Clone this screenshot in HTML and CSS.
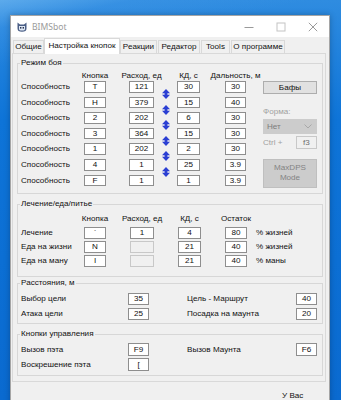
FILE: index.html
```html
<!DOCTYPE html>
<html lang="ru">
<head>
<meta charset="utf-8">
<title>BIMSbot</title>
<link rel="stylesheet" href="styles.css">
</head>
<body>
<div class="desktop">
  <div class="window">
    <div class="titlebar">
      <svg class="app-icon" viewBox="0 0 10 10" width="10" height="10">
        <path d="M0.5 0.5 L3 2.5 L7 2.5 L9.5 0.5 L9.5 6.5 Q9.5 9.7 5 9.7 Q0.5 9.7 0.5 6.5 Z" fill="#4b5f86"/>
        <path d="M2 4 L8 4 L8 7 Q8 8.6 5 8.6 Q2 8.6 2 7 Z" fill="#dfe8f5"/>
        <rect x="3" y="5" width="1.4" height="1.6" fill="#2a3550"/>
        <rect x="5.6" y="5" width="1.4" height="1.6" fill="#2a3550"/>
      </svg>
      <span class="title">BIMSbot</span>
      <div class="controls">
        <div class="ctl"><svg viewBox="0 0 10 10" width="10" height="10"><path d="M0.5 5.5 H9.5" stroke="#9a9a9a" stroke-width="1"/></svg></div>
        <div class="ctl"><svg viewBox="0 0 10 10" width="10" height="10"><rect x="1" y="1" width="8" height="8" fill="none" stroke="#c4c4c4" stroke-width="1"/></svg></div>
        <div class="ctl"><svg viewBox="0 0 10 10" width="10" height="10"><path d="M0.8 0.8 L9.2 9.2 M9.2 0.8 L0.8 9.2" stroke="#9a9a9a" stroke-width="1"/></svg></div>
      </div>
    </div>
    <div class="client">
      <div class="tabs">
        <div class="tab t1">Общие</div>
        <div class="tab active">Настройка кнопок</div>
        <div class="tab t3">Реакции</div>
        <div class="tab t4">Редактор</div>
        <div class="tab t5">Tools</div>
        <div class="tab t6">О программе</div>
      </div>
      <div class="panel">
        <fieldset class="group g-battle">
          <legend>Режим боя</legend>
          <div class="battle">
            <div class="grid battle-grid">
              <div class="hd c-key"><span>Кнопка</span></div>
              <div class="hd c-rs"><span>Расход, ед</span></div>
              <div class="hd c-kd"><span>КД, с</span></div>
              <div class="hd c-ds"><span>Дальность, м</span></div>

              <div class="lbl c-lbl">Способность</div><div class="box c-key">T</div><div class="box c-rs">121</div><div class="box c-kd">30</div><div class="box c-ds">30</div>
              <div class="lbl c-lbl">Способность</div><div class="box c-key">H</div><div class="box c-rs">379</div><div class="box c-kd">15</div><div class="box c-ds">40</div>
              <div class="lbl c-lbl">Способность</div><div class="box c-key">2</div><div class="box c-rs">202</div><div class="box c-kd">6</div><div class="box c-ds">30</div>
              <div class="lbl c-lbl">Способность</div><div class="box c-key">3</div><div class="box c-rs">364</div><div class="box c-kd">15</div><div class="box c-ds">30</div>
              <div class="lbl c-lbl">Способность</div><div class="box c-key">1</div><div class="box c-rs">202</div><div class="box c-kd">2</div><div class="box c-ds">30</div>
              <div class="lbl c-lbl">Способность</div><div class="box c-key">4</div><div class="box c-rs">1</div><div class="box c-kd">25</div><div class="box c-ds">3.9</div>
              <div class="lbl c-lbl">Способность</div><div class="box c-key">F</div><div class="box c-rs">1</div><div class="box c-kd">1</div><div class="box c-ds">3.9</div>

              <div class="arrows">
                <svg class="swap" viewBox="0 0 8 10" width="8" height="10"><path d="M4 0 L8 4.2 L5.4 4.2 L5.4 5.8 L8 5.8 L4 10 L0 5.8 L2.6 5.8 L2.6 4.2 L0 4.2 Z" fill="#2b3fd3"/></svg>
                <svg class="swap" viewBox="0 0 8 10" width="8" height="10"><path d="M4 0 L8 4.2 L5.4 4.2 L5.4 5.8 L8 5.8 L4 10 L0 5.8 L2.6 5.8 L2.6 4.2 L0 4.2 Z" fill="#2b3fd3"/></svg>
                <svg class="swap" viewBox="0 0 8 10" width="8" height="10"><path d="M4 0 L8 4.2 L5.4 4.2 L5.4 5.8 L8 5.8 L4 10 L0 5.8 L2.6 5.8 L2.6 4.2 L0 4.2 Z" fill="#2b3fd3"/></svg>
                <svg class="swap" viewBox="0 0 8 10" width="8" height="10"><path d="M4 0 L8 4.2 L5.4 4.2 L5.4 5.8 L8 5.8 L4 10 L0 5.8 L2.6 5.8 L2.6 4.2 L0 4.2 Z" fill="#2b3fd3"/></svg>
                <svg class="swap" viewBox="0 0 8 10" width="8" height="10"><path d="M4 0 L8 4.2 L5.4 4.2 L5.4 5.8 L8 5.8 L4 10 L0 5.8 L2.6 5.8 L2.6 4.2 L0 4.2 Z" fill="#2b3fd3"/></svg>
                <svg class="swap" viewBox="0 0 8 10" width="8" height="10"><path d="M4 0 L8 4.2 L5.4 4.2 L5.4 5.8 L8 5.8 L4 10 L0 5.8 L2.6 5.8 L2.6 4.2 L0 4.2 Z" fill="#2b3fd3"/></svg>
              </div>
            </div>
            <div class="side">
              <div class="btn">Бафы</div>
              <div class="dis-label form-label">Форма:</div>
              <div class="select"><span>Нет</span><svg viewBox="0 0 8 5" width="8" height="5"><path d="M0.5 0.5 L4 4 L7.5 0.5" fill="none" stroke="#a8a8a8" stroke-width="1"/></svg></div>
              <div class="ctrl-row"><span class="dis-label">Ctrl +</span><div class="box dis-box">f3</div></div>
              <div class="btn btn-dis">MaxDPS<br>Mode</div>
            </div>
          </div>
        </fieldset>

        <fieldset class="group g-heal">
          <legend>Лечение/еда/питье</legend>
          <div class="grid heal-grid">
            <div class="hd c-key"><span>Кнопка</span></div>
            <div class="hd c-rs"><span>Расход, ед</span></div>
            <div class="hd c-kd"><span>КД, с</span></div>
            <div class="hd c-ds"><span>Остаток</span></div>

            <div class="lbl c-lbl">Лечение</div><div class="box c-key">`</div><div class="box c-rs">1</div><div class="box c-kd">4</div><div class="box c-ds">80</div><div class="lbl c-unit">% жизней</div>
            <div class="lbl c-lbl">Еда на жизни</div><div class="box c-key">N</div><div class="box c-rs dis-box"></div><div class="box c-kd">21</div><div class="box c-ds">40</div><div class="lbl c-unit">% жизней</div>
            <div class="lbl c-lbl">Еда на ману</div><div class="box c-key">I</div><div class="box c-rs dis-box"></div><div class="box c-kd">21</div><div class="box c-ds">40</div><div class="lbl c-unit">% маны</div>
          </div>
        </fieldset>

        <fieldset class="group g-dist">
          <legend>Расстояния, м</legend>
          <div class="grid pair-grid dist-grid">
            <div class="lbl">Выбор цели</div><div class="box">35</div><div></div><div class="lbl">Цель - Маршрут</div><div class="box">40</div>
            <div class="lbl">Атака цели</div><div class="box">25</div><div></div><div class="lbl">Посадка на маунта</div><div class="box">20</div>
          </div>
        </fieldset>

        <fieldset class="group g-keys">
          <legend>Кнопки управления</legend>
          <div class="grid pair-grid keys-grid">
            <div class="lbl">Вызов пэта</div><div class="box">F9</div><div></div><div class="lbl">Вызов Маунта</div><div class="box">F6</div>
            <div class="lbl">Воскрешение пэта</div><div class="box">[</div>
          </div>
        </fieldset>
      </div>
      <div class="status">У Вас</div>
    </div>
  </div>
</div>
</body>
</html>
```

FILE: styles.css
```css
html, body {
  margin: 0;
  padding: 0;
}

body {
  width: 341px;
  height: 400px;
  overflow: hidden;
  font-family: "Liberation Sans", Arial, sans-serif;
  font-size: 8.1px;
  color: #111;
}

.desktop {
  box-sizing: border-box;
  width: 341px;
  height: 400px;
  padding: 15px 11px 0 10px;
  background:
    linear-gradient(168deg, rgba(130, 195, 245, 0.55) 0%, rgba(80, 160, 235, 0.25) 6%, rgba(0, 0, 0, 0) 14%),
    linear-gradient(180deg, #2f8ce0 0%, #0e74d8 30%, #0a6ad0 100%);
}

.window {
  box-sizing: border-box;
  width: 320px;
  height: 400px;
  border: 1px solid #a5a5a5;
  border-bottom: 0;
  background: #f0f0f0;
  box-shadow: 0 0 6px rgba(0, 0, 0, 0.25);
}

/* ---------- title bar ---------- */
.titlebar {
  height: 21px;
  background: #fff;
  display: flex;
  align-items: center;
}

.app-icon {
  margin-left: 6px;
}

.title {
  margin-left: 5px;
  font-family: "Noto Sans", "Liberation Sans", sans-serif;
  font-size: 8.6px;
  color: #9b9b9b;
}

.controls {
  margin-left: auto;
  display: flex;
  height: 21px;
}

.ctl {
  width: 32px;
  height: 21px;
  display: flex;
  align-items: center;
  justify-content: center;
}

/* ---------- tabs ---------- */
.client {
  background: #f0f0f0;
}

.tabs {
  display: flex;
  align-items: flex-end;
  height: 16px;
  padding-left: 2px;
}

.tab {
  box-sizing: border-box;
  height: 13px;
  line-height: 12px;
  border: 1px solid #d9d9d9;
  border-bottom: 0;
  background: #f0f0f0;
  text-align: center;
  white-space: nowrap;
  margin-right: 1px;
}

.t1 { width: 31px; margin-right: 0; }
.t3 { width: 37px; }
.t4 { width: 42px; }
.t5 { width: 29px; }
.t6 { width: 54px; }

.tab.active {
  width: 76px;
  height: 16px;
  line-height: 14px;
  background: #fff;
  border-color: #d9d9d9;
  margin-right: 0;
  margin-bottom: -1px;
  position: relative;
  z-index: 1;
}

/* ---------- panel ---------- */
.panel {
  box-sizing: border-box;
  width: 314px;
  margin-left: 1px;
  border: 1px solid #d9d9d9;
  background: #f0f0f0;
  padding: 4px 0 5px 0;
}

.group {
  box-sizing: border-box;
  width: 306px;
  min-inline-size: 0;
  margin: 0 0 0 4px;
  border: 1px solid #d7d7d7;
  padding: 3px 3px 3px 3px;
}

.group legend {
  padding: 0 1px;
  margin-left: -1px;
  height: 10px;
  line-height: 10px;
}

.g-heal { margin-top: 5px; padding-top: 5px; padding-bottom: 7px; }
.g-dist { margin-top: 1px; padding-top: 5px; padding-bottom: 3px; }
.g-keys { margin-top: 5px; padding-top: 4px; padding-bottom: 4px; }

.grid {
  display: grid;
}

.battle {
  display: flex;
}

.battle-grid {
  grid-template-columns: 63px 22px 23px 25px 23px 23px 25px 21px;
  grid-template-rows: 10px repeat(7, 15.6px);
}

.heal-grid {
  grid-template-columns: 63px 22px 24px 24px 24px 23px 24px 22px 9px auto;
  grid-template-rows: 13px repeat(3, 14px);
}

.c-lbl { grid-column: 1; }
.c-key { grid-column: 2; }
.c-rs { grid-column: 4; }
.c-kd { grid-column: 6; }
.c-ds { grid-column: 8; }
.c-unit { grid-column: 10; }

.hd {
  display: flex;
  justify-content: center;
  white-space: nowrap;
  line-height: 10px;
  align-self: start;
}

.lbl {
  white-space: nowrap;
  line-height: 11.6px;
  align-self: start;
}

.box {
  box-sizing: border-box;
  height: 11.6px;
  line-height: 9.6px;
  border: 1px solid #8e8e8e;
  background: #fff;
  text-align: center;
  align-self: start;
}

.heal-grid .box { height: 12px; line-height: 10px; }
.heal-grid .lbl { line-height: 12px; }

.dis-box {
  background: #f0f0f0;
  border-color: #c8c8c8;
  color: #6d6d6d;
}

.arrows {
  grid-column: 5;
  grid-row: 2 / span 7;
  display: flex;
  flex-direction: column;
  align-items: center;
  padding-top: 8px;
}

.swap {
  display: block;
  margin-bottom: 5.6px;
}

/* ---------- right side of battle group ---------- */
.side {
  width: 54px;
  margin-left: 17px;
  padding-top: 10px;
  display: flex;
  flex-direction: column;
}

.btn {
  box-sizing: border-box;
  height: 13px;
  line-height: 11px;
  border: 1px solid #adadad;
  background: #e1e1e1;
  text-align: center;
}

.btn-dis {
  height: 29px;
  line-height: 10px;
  padding-top: 3px;
  margin-top: 10px;
  border-color: #bfbfbf;
  background: #cccccc;
  color: #838383;
}

.dis-label {
  color: #a0a0a0;
}

.form-label {
  margin-top: 13px;
  line-height: 10px;
}

.select {
  box-sizing: border-box;
  height: 15px;
  margin-top: 2px;
  background: #cccccc;
  border: 1px solid #cccccc;
  color: #7d7d7d;
  display: flex;
  align-items: center;
  justify-content: space-between;
  padding: 0 4px 0 3px;
}

.ctrl-row {
  margin-top: 2px;
  display: flex;
  align-items: center;
  justify-content: space-between;
  height: 13px;
}

.ctrl-row .box {
  width: 21px;
  height: 13px;
  line-height: 11px;
}

/* ---------- pair groups ---------- */
.pair-grid {
  grid-template-columns: 107px 21px 38px 109px 21px;
}

.dist-grid {
  grid-template-rows: 12px 12px;
  row-gap: 3px;
}

.dist-grid .box { height: 12px; line-height: 10px; }
.dist-grid .lbl { line-height: 12px; }

.keys-grid {
  grid-template-rows: 13px 13px;
  row-gap: 2px;
}

.keys-grid .box { height: 13px; line-height: 11px; }
.keys-grid .lbl { line-height: 13px; }

.status {
  padding: 9px 0 0 271px;
  line-height: 10px;
}
```
